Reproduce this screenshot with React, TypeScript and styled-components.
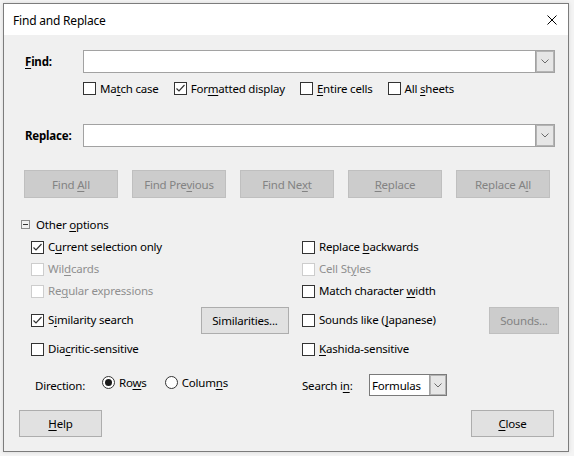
import React from "react";
import styled, { createGlobalStyle, css } from "styled-components";

const GlobalStyle = createGlobalStyle`
  html, body {
    margin: 0;
    padding: 0;
  }
  body {
    background: #f4f4f4;
    font-family: "Noto Sans", "Open Sans", sans-serif;
    font-size: 11.5px;
    letter-spacing: -0.2px;
    color: #000;
  }
  u {
    text-underline-offset: 2px;
  }
`;

const Page = styled.div`
  width: 574px;
  height: 456px;
  padding: 3px;
  box-sizing: border-box;
`;

const Window = styled.div`
  width: 566px;
  height: 449px;
  box-sizing: border-box;
  border: 1px solid #7c7c7c;
  background: #f0f0f0;
  display: flex;
  flex-direction: column;
  box-shadow: 0 0 4px rgba(0, 0, 0, 0.12);
`;

const TitleBar = styled.div`
  height: 31px;
  flex: none;
  background: #fff;
  display: flex;
  align-items: center;
  justify-content: space-between;
  padding: 1px 11px 0 9px;
  box-sizing: border-box;
  font-size: 12px;
`;

const CloseX = styled.span`
  width: 10px;
  height: 10px;
  display: flex;
`;

const Body = styled.div`
  flex: 1;
  display: flex;
  flex-direction: column;
  padding: 0 9px 0 15px;
`;

const FieldRow = styled.div<{ $top: number }>`
  display: grid;
  grid-template-columns: 58px 1fr;
  align-items: center;
  height: 23px;
  margin: ${(p) => p.$top}px 4px 0 6px;
`;

const FieldLabel = styled.span`
  font-weight: bold;
`;

const Combo = styled.div`
  height: 23px;
  box-sizing: border-box;
  display: flex;
  background: #fff;
  border: 1px solid #a2a2a2;
`;

const ComboInput = styled.div`
  flex: 1;
`;

const ComboButton = styled.div<{ $width: number }>`
  width: ${(p) => p.$width}px;
  flex: none;
  align-self: stretch;
  display: flex;
  align-items: center;
  justify-content: center;
  background: #e6e6e6;
  border-left: 1px solid #a2a2a2;
  box-shadow: inset -1px -1px 0 #b4b4b4, inset 1px 1px 0 #b4b4b4;
`;

const CheckRow = styled.div`
  display: flex;
  align-items: center;
  gap: 15px;
  height: 13px;
  margin: 9px 0 0 64px;
`;

const CheckLabel = styled.label<{ $disabled?: boolean }>`
  display: inline-flex;
  align-items: center;
  gap: 4px;
  white-space: nowrap;
  line-height: 16px;
  color: ${(p) => (p.$disabled ? "#8f8f8f" : "#000")};
`;

const Box = styled.span<{ $disabled?: boolean }>`
  width: 13px;
  height: 13px;
  box-sizing: border-box;
  flex: none;
  display: flex;
  background: #fff;
  border: 1px solid ${(p) => (p.$disabled ? "#cdcdcd" : "#333")};
`;

const RadioDot = styled.span<{ $checked?: boolean }>`
  width: 13px;
  height: 13px;
  box-sizing: border-box;
  flex: none;
  border-radius: 50%;
  border: 1px solid #333;
  background: #fff;
  display: flex;
  align-items: center;
  justify-content: center;
  &::after {
    content: "";
    width: 7px;
    height: 7px;
    border-radius: 50%;
    background: #1a1a1a;
    display: ${(p) => (p.$checked ? "block" : "none")};
  }
`;

const ButtonRow = styled.div`
  display: flex;
  gap: 14px;
  margin: 23px 0 0 5px;
`;

const PushButton = styled.button<{ $w: number; $h?: number }>`
  width: ${(p) => p.$w}px;
  height: ${(p) => p.$h ?? 28}px;
  box-sizing: border-box;
  padding: 0;
  font: inherit;
  letter-spacing: inherit;
  color: #000;
  background: #e1e1e1;
  border: 1px solid #adadad;
  ${(p) =>
    p.disabled &&
    css`
      color: #838383;
      background: #cccccc;
      border-color: #bfbfbf;
    `}
`;

const Expander = styled.div`
  display: flex;
  align-items: center;
  gap: 6px;
  height: 22px;
  margin: 15px 0 0 2px;
`;

const MinusBox = styled.span`
  width: 9px;
  height: 9px;
  box-sizing: border-box;
  border: 1px solid #8a8a8a;
  display: flex;
  align-items: center;
  justify-content: center;
  &::after {
    content: "";
    width: 5px;
    height: 1px;
    background: #333;
  }
`;

const OptionsGrid = styled.div`
  display: grid;
  grid-template-columns: 170px 101px 187px 70px;
  grid-template-rows: 22px 22px 22px 36px 22px;
  align-items: center;
  margin: 1px 0 0 12px;
`;

const DirectionRow = styled.div`
  display: grid;
  grid-template-columns: 67px 200px 67px auto;
  align-items: center;
  height: 22px;
  margin: 14px 0 0 16px;
`;

const Radios = styled.div`
  display: flex;
  gap: 18px;
  margin-top: -5px;
`;

const Select = styled.div`
  width: 78px;
  height: 22px;
  box-sizing: border-box;
  border: 1px solid #7a7a7a;
  background: #fff;
  display: flex;
  padding-left: 2px;
  align-items: center;
`;

const SelectText = styled.span`
  flex: 1;
`;

const BottomRow = styled.div`
  display: flex;
  justify-content: space-between;
  margin: 14px 5px 0 0;
`;

const Chevron = () => (
  <svg width="8" height="5" viewBox="0 0 8 5">
    <polyline points="0.5,0.5 4,4 7.5,0.5" fill="none" stroke="#6a6a6a" strokeWidth="1" />
  </svg>
);

type CheckProps = { checked?: boolean; disabled?: boolean; children: React.ReactNode };

const Check = ({ checked, disabled, children }: CheckProps) => (
  <CheckLabel $disabled={disabled}>
    <Box $disabled={disabled}>
      {checked && (
        <svg width="11" height="11" viewBox="0 0 11 11">
          <polyline points="1.5,5.5 4,8 9.5,2" fill="none" stroke="#333" strokeWidth="1.2" />
        </svg>
      )}
    </Box>
    <span>{children}</span>
  </CheckLabel>
);

const Radio = ({ checked, children }: { checked?: boolean; children: React.ReactNode }) => (
  <CheckLabel>
    <RadioDot $checked={checked} />
    <span>{children}</span>
  </CheckLabel>
);

const Combobox = () => (
  <Combo>
    <ComboInput />
    <ComboButton $width={18}>
      <Chevron />
    </ComboButton>
  </Combo>
);

export default function App() {
  return (
    <Page>
      <GlobalStyle />
      <Window>
        <TitleBar>
          <span>Find and Replace</span>
          <CloseX>
            <svg width="10" height="10" viewBox="0 0 10 10">
              <path d="M0.5 0.5 L9.5 9.5 M9.5 0.5 L0.5 9.5" stroke="#000" strokeWidth="1" />
            </svg>
          </CloseX>
        </TitleBar>
        <Body>
          <FieldRow $top={15}>
            <FieldLabel>
              <u>F</u>ind:
            </FieldLabel>
            <Combobox />
          </FieldRow>
          <CheckRow>
            <Check>
              Ma<u>t</u>ch case
            </Check>
            <Check checked>
              For<u>m</u>atted display
            </Check>
            <Check>
              <u>E</u>ntire cells
            </Check>
            <Check>
              All <u>s</u>heets
            </Check>
          </CheckRow>
          <FieldRow $top={29}>
            <FieldLabel>Replace:</FieldLabel>
            <Combobox />
          </FieldRow>
          <ButtonRow>
            <PushButton $w={94} disabled>
              Find <u>A</u>ll
            </PushButton>
            <PushButton $w={94} disabled>
              Find Pre<u>v</u>ious
            </PushButton>
            <PushButton $w={94} disabled>
              Find Ne<u>x</u>t
            </PushButton>
            <PushButton $w={94} disabled>
              <u>R</u>eplace
            </PushButton>
            <PushButton $w={94} disabled>
              Replace A<u>l</u>l
            </PushButton>
          </ButtonRow>
          <Expander>
            <MinusBox />
            <span>
              Other <u>o</u>ptions
            </span>
          </Expander>
          <OptionsGrid>
            <Check checked>
              C<u>u</u>rrent selection only
            </Check>
            <span />
            <Check>
              Replace <u>b</u>ackwards
            </Check>
            <span />

            <Check disabled>
              Wil<u>d</u>cards
            </Check>
            <span />
            <Check disabled>
              Cell St<u>y</u>les
            </Check>
            <span />

            <Check disabled>
              Re<u>g</u>ular expressions
            </Check>
            <span />
            <Check>
              Match character <u>w</u>idth
            </Check>
            <span />

            <Check checked>
              S<u>i</u>milarity search
            </Check>
            <PushButton $w={88} $h={27}>
              Similarities...
            </PushButton>
            <Check>
              Sounds like (<u>J</u>apanese)
            </Check>
            <PushButton $w={70} $h={27} disabled>
              Sounds...
            </PushButton>

            <Check>
              Dia<u>c</u>ritic-sensitive
            </Check>
            <span />
            <Check>
              <u>K</u>ashida-sensitive
            </Check>
            <span />
          </OptionsGrid>
          <DirectionRow>
            <span>Direction:</span>
            <Radios>
              <Radio checked>
                Ro<u>w</u>s
              </Radio>
              <Radio>
                Colum<u>n</u>s
              </Radio>
            </Radios>
            <span>
              Search i<u>n</u>:
            </span>
            <Select>
              <SelectText>Formulas</SelectText>
              <ComboButton $width={16}>
                <Chevron />
              </ComboButton>
            </Select>
          </DirectionRow>
          <BottomRow>
            <PushButton $w={83} $h={27}>
              <u>H</u>elp
            </PushButton>
            <PushButton $w={83} $h={27}>
              <u>C</u>lose
            </PushButton>
          </BottomRow>
        </Body>
      </Window>
    </Page>
  );
}
